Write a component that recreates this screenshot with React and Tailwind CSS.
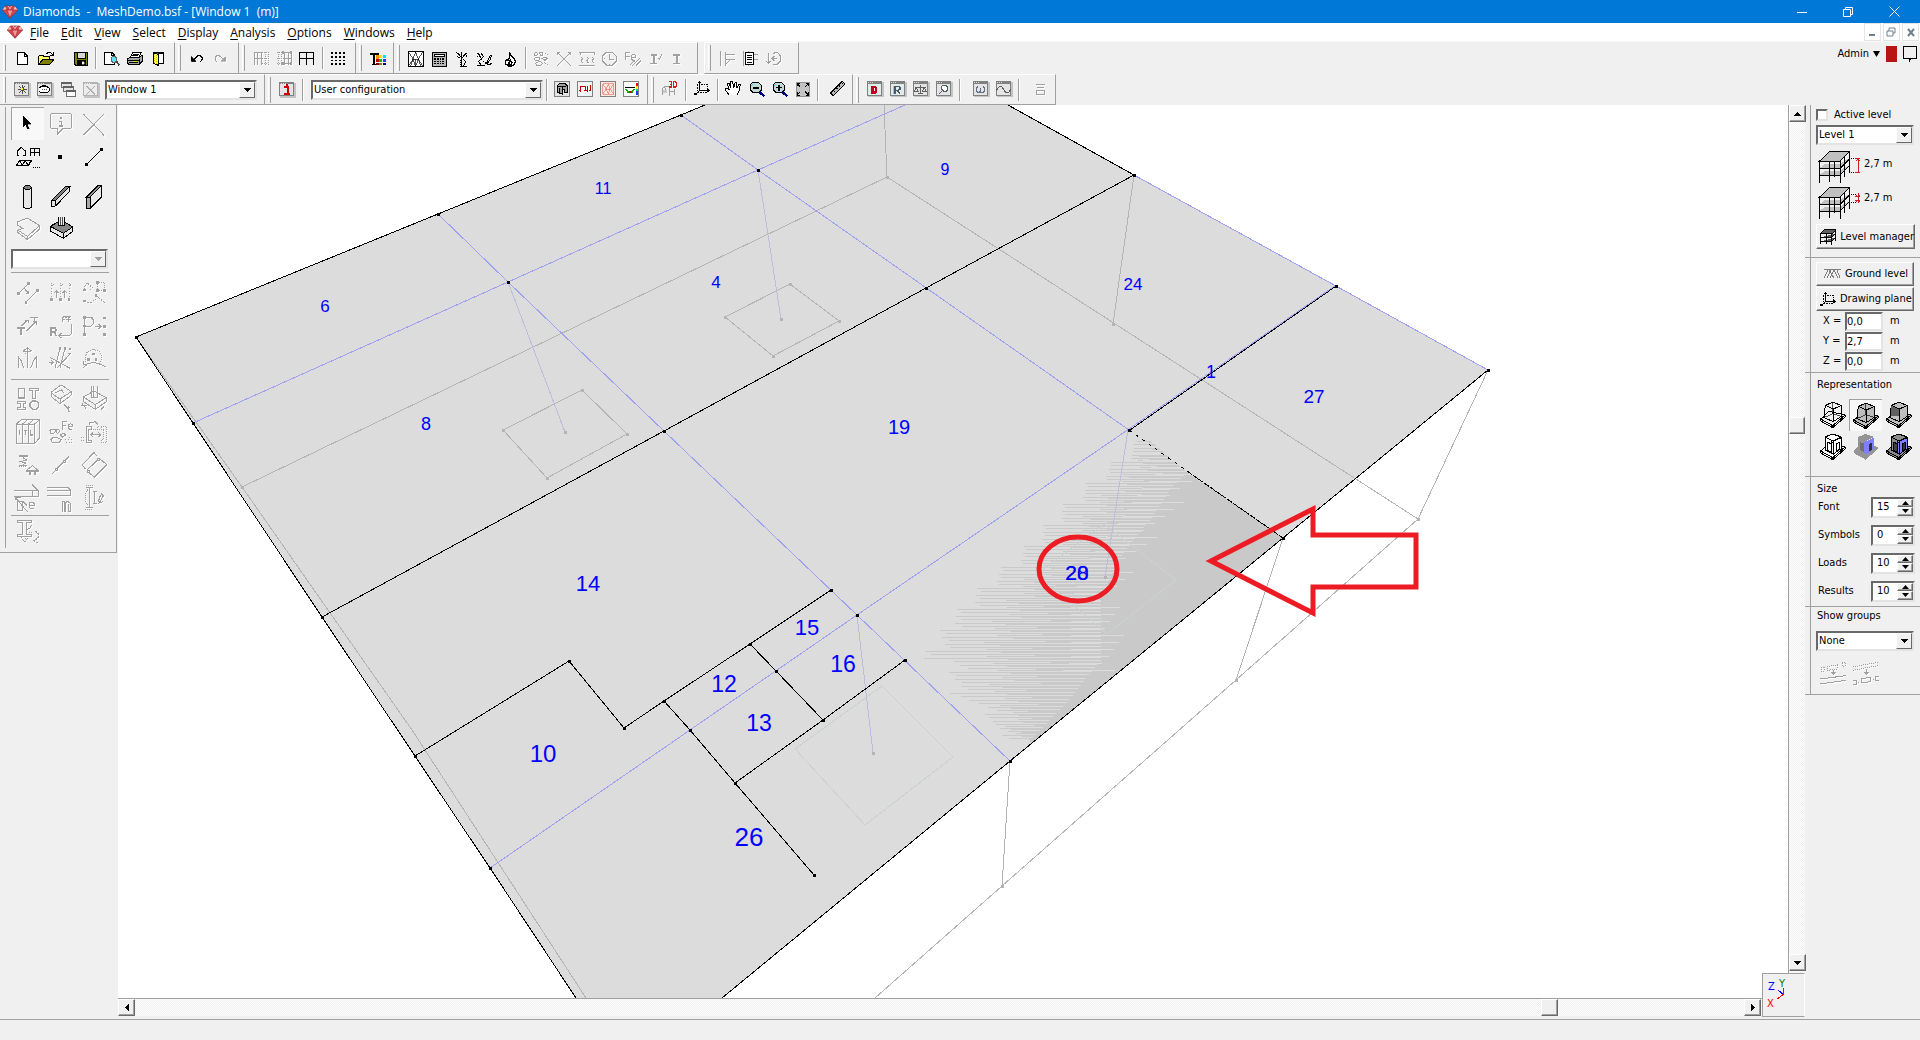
import React from "react";

const K = "#000";
const G = "#a0a0a0";
const R = "#c00000";
const N = "none";

/* Frame of a small tool window: grey title strip, light body */
const win = (x, y, c = "#808080", body = "#e4e4e4") => [
  [`M${x + 3} ${y + 3}h45v42h-45z`, "#c4c4c4", "#c4c4c4"],
  [`M${x} ${y}h42v41h-42z`, c, body],
  [`M${x} ${y + 3}h42`, c, N, 7],
  [`M${x + 4} ${y + 3}h14`, "#fff", N, 2, "2 4"],
];

/* name: [origin x, origin y, shapes]; three units make one pixel.
   shape: [path, stroke, fill, width, dashes] */
const ICONS = {
  new: [33, 138, [["M53 154H72L83 165V191H53ZM72 154V165H83", K, "#fff"]]],
  open: [102, 138, [
    ["M116 166L120 163H128L132 167H148V175H128L117 189Z", K, "#ffff60"],
    ["M117 190L128 176H161L150 190Z", K, "#808000"],
    ["M139 160L144 155H152L157 161M159 154V163H149", K],
  ]],
  save: [207, 138, [
    ["M224 155H262V192H227L224 189Z", K, "#808000"],
    ["M231 155H255V171H231Z", K, "#d8d8d8"],
    ["M231 179H255V192H231Z", K, K],
    ["M246 182H252V190H246Z", "#fff", "#fff", 1],
  ]],
  preview: [300, 138, [
    ["M314 153H334L344 163V191H314ZM334 153V163H344", K, "#fff"],
    ["M333 171L338 167H345L350 171V179L345 184H338L333 179Z", "#666", "#60e0f0"],
    ["M349 182L359 193", "#444", N, 6],
  ]],
  print: [369, 138, [
    ["M390 170L398 154H424L416 170Z", K, "#fff"],
    ["M399 159H417M396 164H414", K],
    ["M383 173L390 169H418L427 163V180L417 191H387L383 187Z", K, "#a8a8a8"],
    ["M384 179H416M388 185H414M417 173V190", K],
    ["M400 182H410", "#e0e000", N, 3],
  ]],
  book: [444, 138, [
    ["M459 154H490V186H459Z", K, "#808000"],
    ["M474 157H490V186H474Z", K, "#fff"],
    ["M459 154L475 161V193L459 186Z", K, "#ffff40"],
    ["M464 160V186M469 162V188", "#c0b000", N, 2, "3 3"],
  ]],
  undo: [561, 138, [
    ["M577 167V181H592ZM592 181L580 181L577 178", K, K, 2],
    ["M583 177L592 168L597 164H604L609 169V176L602 184", K, N, 3],
  ]],
  redo: [630, 138, [
    ["M680 167V181H666Z", G, G, 2],
    ["M675 177L666 168L660 164H653L648 169V176L655 184", G, N, 3],
  ]],
  gridA: [753, 138, [
    ["M765 154H787V193M765 154V193M765 172H787M776 154V193", G],
    ["M790 154H808V193M799 154V193M790 172H808M790 188H808", G, N, 3, "3 3"],
  ]],
  gridB: [822, 138, [
    ["M835 154H855M835 172H855M835 188H855M837 154V192M846 154V192", G, N, 3, "3 3"],
    ["M857 154H877V192M857 154V192M857 172H877M867 154V192M857 188H877", G],
    ["M849 154H854M849 188H854M874 154H879M874 188H879", G, N, 8],
  ]],
  gridC: [891, 138, [["M902 154H943V193M902 154V193M922 154V193M902 172H943", K, N, 4]]],
  dots: [981, 138, [["M994 156H1034M994 167H1034M994 178H1034M994 189H1034", K, N, 5, "5 7"]]],
  text: [84, 18, [
    ["M94 38H119M106 36V70", K, N, 6],
    ["M100 71H112", K, N, 4],
    ["M112 46H120M112 53H120", "#ff9000", N, 7],
    ["M121 46H129", "#ffe000", N, 8],
    ["M131 46H141", "#00e0ff", N, 8],
    ["M112 58H120", "#c00000", N, 8],
    ["M121 58H129", "#00c000", N, 8],
    ["M131 58H141", "#2040ff", N, 8],
    ["M112 69H120", "#800000", N, 8],
    ["M121 69H129", "#808000", N, 8],
    ["M131 69H141", "#000080", N, 8],
  ]],
  mesh: [198, 18, [
    ["M208 32H252V76H208Z", K, "#fff", 3],
    ["M208 32L222 54L208 76M252 32L238 54L252 76M222 54L230 34L238 54ZM222 54L215 76M222 54L230 76L238 54L245 76M230 54V76", K, N, 2],
  ]],
  calc: [267, 18, [
    ["M280 33H322V76H280Z", K, "#b8b8b8"],
    ["M286 39H316V47H286Z", K, "#fff"],
    ["M286 54H318M286 61H318M286 68H318", K, N, 4, "5 3"],
  ]],
  tree: [336, 18, [
    ["M352 35L360 40L367 50M385 35L377 41L370 50M368 34V75M362 75H383M373 54L380 62L374 74", K, N, 3],
    ["M354 45L362 50M384 44L374 52M364 56V72", K, N, 3, "3 3"],
  ]],
  mode: [405, 18, [
    ["M413 35L422 42L427 52L419 62L428 74M415 74H438M425 35L433 46L426 56M437 62L441 68L453 44H457L454 55L444 69L452 72L458 66", K, N, 3],
    ["M413 46L423 48M434 60L426 70", K, N, 3, "3 3"],
  ]],
  fire: [480, 18, [["M513 36L516 44L526 54L529 62L526 70L519 75H509L501 70L499 62L502 55L507 58L511 49ZM511 72L509 65L514 57L519 65L517 72Z", K, "#fff", 4]]],
  stones: [573, 18, [
    ["M586 38L591 34L596 38L593 43H587ZM602 34H610L612 42L604 45ZM586 52L592 48H599L603 54L597 59H589ZM590 66L598 62H606L610 68L604 74H594ZM609 52L618 48L625 53L618 58Z", G],
    ["M618 37L628 41M614 64L628 70", G, N, 3, "3 3"],
  ]],
  cross: [642, 18, [["M655 34L695 74M695 34L655 74M655 42V34H663M687 34H695V42", G]]],
  beamload: [711, 18, [["M721 35H769M723 35V42M767 35V42M721 72H769M727 48L731 53L727 59L731 66M744 48L748 53L744 59L748 66M760 48L764 53L760 59L764 66", G]]],
  clock: [780, 18, [["M803 33H819L831 45V61L819 73H803L791 61V45ZM811 38V54H824M811 70V74M795 53H799", G]]],
  fe: [849, 18, [
    ["M860 57V34H874M860 45H872M878 49H890V43L886 40H880L878 44V54L882 58H889", G],
    ["M872 73L886 60M881 74L902 52M891 74L906 58", G],
  ]],
  profA: [918, 18, [["M935 42H953M944 42V66M933 67H954", G, N, 5], ["M956 50L961 54L970 38", G]]],
  profB: [987, 18, [["M1003 42H1023M1013 42V66M1002 67H1024", G, N, 5]]],
  lvlA: [108, 18, [["M122 30V76M136 34V76M136 41H165M136 56H165M138 68L152 56", G]]],
  lvlB: [177, 18, [
    ["M190 30V76M222 40H234M222 56H234M204 30V76", G],
    ["M197 34H220V71H197Z", K, "#fff", 4],
    ["M202 42H217M202 49H217M202 56H217M202 63H217", K, N, 3],
  ]],
  lvlC: [246, 18, [["M265 36V67M259 60L265 67L272 60M280 40L285 35H293L300 43V61L292 70L280 69M276 53H292M283 46L276 53L283 60", G]]],
  wSun: [36, 234, [...win(47, 246), ["M70 256V282M56 268H84M61 258L79 278M79 258L61 278", K, N, 2], ["M67 268H73", "#ffff00", N, 6]]],
  wTea: [105, 234, [...win(116, 246), ["M119 264L126 260H144L152 266V272L144 278H126L120 274M126 260L131 256H138L143 260", K, "#fff"], ["M128 269H146", K, N, 2, "3 3"]]],
  wStack: [174, 234, [
    ["M186 246H216V262H186Z", "#707070", "#e4e4e4"], ["M186 248H216", "#606060", N, 7],
    ["M193 258H223V275H193Z", "#707070", "#e4e4e4"], ["M193 260H223", "#606060", N, 7],
    ["M201 270H230V288H201Z", "#707070", "#fff"], ["M201 272H230", "#606060", N, 7],
  ]],
  wDel: [243, 234, [...win(254, 246, "#b4b4b4", "#ececec"), ["M262 258L288 284M288 258L262 284", "#b0b0a8", N, 3]]],
  info: [825, 234, [...win(836, 246), ["M850 262H860V281M848 281H867", "#d00000", N, 6], ["M854 254H861", "#d00000", N, 5]]],
  vSolid: [633, 114, [
    ["M643 125H688V169H643Z", "#808080", "#e4e4e4"],
    ["M651 137L658 131H676L682 137V158H674V150L666 148V162L651 156Z", K, "#a0a0a0", 3],
    ["M651 137L667 141L682 137M667 141V150M658 144V158", K, N, 3],
  ]],
  vLoad: [702, 114, [["M713 125H758V169H713Z", "#808080", "#f4f4f4"], ["M720 156V139H736V154M736 139H737M750 136V154M716 150H724M732 150H740M746 150H754M742 139V156", R, N, 3]]],
  vMesh: [771, 114, [["M782 125H827V169H782Z", "#808080", "#ffe8e0"], ["M788 131H821V163H788ZM788 131L799 147L788 163M821 131L810 147L821 163M799 147L805 132L810 147ZM799 147L805 163L810 147", "#f07070", N, 2]]],
  vRes: [840, 114, [
    ["M851 125H896V169H851Z", "#808080", "#fff"], ["M854 143H884", K, N, 3],
    ["M857 146L863 156H877L883 146", "#00b000", N, 4], ["M866 156H876", "#e00000", N, 5],
    ["M891 130V140", "#ff0000", N, 6], ["M891 138V146", "#ffe000", N, 6], ["M891 146V154", "#00d0a0", N, 6], ["M891 154V165", "#0040ff", N, 6],
  ]],
  rebar3d: [957, 114, [
    ["M967 146L975 140H988V168M967 146V164M975 143V160M988 154H1003V166M1003 147V160", "#a0a0a0", N, 3],
    ["M969 152H982M969 156H982", "#c8c8c8", N, 4],
    ["M987 125H994V141H987M989 133H994M1000 125H1006L1010 129V137L1006 141H1000Z", "#d02020", N, 4],
  ]],
  plane: [33, 114, [["M52 133H82V158H52Z", K, N, 3, "3 2"], ["M59 125V152M59 152H88M44 164L59 152M55 129L59 125L63 129M84 148L88 152L84 156M44 158V164H50", K, N, 3]]],
  hand: [129, 114, [["M151 166L140 151V145H145L151 151L145 132L150 130L156 144L155 125H161L164 143L169 127H174L173 145L179 133H184L180 153L174 166", K, "#fff", 3]]],
  zout: [195, 114, [["M237 155L253 169", "#000080", N, 7], ["M219 127H235L244 136V150L236 157H219L210 149V135Z", K, "#c0d8d8"], ["M214 137L220 131", "#20e0e0"], ["M219 144H237", K, N, 4]]],
  zin: [264, 114, [["M306 155L322 169", "#000080", N, 7], ["M288 127H304L313 136V150L305 157H288L279 149V135Z", K, "#c0d8d8"], ["M283 137L289 131", "#20e0e0"], ["M288 143H306M297 134V152", K, N, 4]]],
  zall: [333, 114, [["M348 127H389V168H348Z", "#909090", "#c4c4c4"], ["M351 130L361 140M386 130L376 140M351 165L361 155M386 165L376 155M351 139V130H360M377 130H386V139M351 156V165H360M377 165H386V156", K, N, 3]]],
  ruler: [438, 114, [["M452 159L487 124L495 132L460 167Z", K, "#b8b8b8"], ["M461 152L465 156M469 144L473 148M477 136L481 140M485 128L489 132", K]]],
  wD: [555, 114, [...win(564, 125, "#808080", "#e0ece8"), ["M577 138H588L593 143V155L588 160H577Z", "#c00020", "#c00020", 3], ["M585 144V154", "#fff", N, 3]]],
  wR: [624, 114, [...win(633, 125, "#808080", "#e0ece8"), ["M648 161V139H659L662 143V148L658 151H648M656 151L662 161", "#485868", N, 5], ["M644 138V161", "#d09060", N, 2]]],
  wBal: [693, 114, [...win(702, 125), ["M724 136V160M716 161H732M708 143H740M712 143L706 154H718ZM736 143L730 154H742Z", "#606060", N, 3]]],
  wMag: [762, 114, [...win(771, 125), ["M790 137H802L806 141V149L802 153H793L788 148V141ZM790 152L780 161", "#506070", "#fff"]]],
  wOm: [870, 114, [...win(882, 125), ["M896 139L892 144V153L896 158H901L904 153V145M904 153L907 158H912L916 153V144L912 139", "#607088", N, 4]]],
  wSin: [939, 114, [...win(951, 125), ["M952 152L958 143L964 139L970 142L978 155L984 159L990 156L996 147", "#606060"]]],
  stack: [1050, 114, [["M1072 133H1097M1075 142H1094M1072 151H1097V163H1072Z", G]]],

  arrow: [33, 21, [["M69 48V82L77 74L83 88L88 86L82 72H93Z", K, K, 1]]],
  note: [132, 21, [["M155 40H211L215 45V81L211 86H188L173 101V86H155L151 81V45Z", G], ["M183 51V56M178 64H184V77M178 78H190", G, N, 5]]],
  del: [231, 21, [["M250 42L312 106M312 42L250 106", G]]],
  shapes: [33, 120, [["M58 166H52V153L63 142L76 153V166H70M90 144H117V167M90 144V167M103 144V167M90 156H117M50 195L59 182H95L86 195ZM59 182L67 195L76 182L84 195L94 182", K], ["M98 202H120", K, N, 3, "3 3"]]],
  node: [132, 120, [["M174 171H186", K, N, 12]]],
  line: [231, 120, [["M260 193L305 149", K], ["M256 193H264M301 149H309", K, N, 8]]],
  column: [33, 243, [["M70 262V322L76 325H89L95 322V262", K, "#e8e8e8"], ["M70 262L76 257H89L95 262L89 268H76Z", K, "#808080"]]],
  beam: [132, 243, [["M154 302L198 259L209 260V273L167 318L154 319Z", K, "#e4e4e4"], ["M154 302H166L209 260L198 258Z", K, "#808080"], ["M166 302V318", K]]],
  wall: [231, 243, [["M259 291L292 258L305 256V290L271 324L259 325Z", K, "#e8e8e8"], ["M259 291V325H271V290Z", K, "#a8a8a8"], ["M259 291H271L305 256L292 258Z", K, "#909090"]]],
  slab: [33, 339, [["M52 366L82 354L119 377V387L82 419L53 397V390L68 385L52 375ZM82 419V409L119 377M82 409L53 390", G]]],
  footing: [132, 339, [["M151 379L184 360L218 381V394L190 415L151 393Z", K, "#e8e8e8"], ["M151 379L184 360L218 381L190 400Z", K, "#888"], ["M190 400V415", K], ["M175 351V377H193V351", K, "#f0f0f0"], ["M181 351V377M187 351V377", K, N, 2]]],
  dupA: [33, 534, [["M56 583L85 553M78 610L112 575M72 567L86 584M86 575V584H77", G], ["M52 583H60M81 553H89M74 610H82M108 575H116", G, N, 8]]],
  dupB: [132, 534, [["M155 602V553M181 602V553M207 602V553", G, N, 3, "3 5"], ["M169 597V575M163 582L169 575L175 582M194 597V575M188 582L194 575L200 582M157 560L163 556M183 560L189 556M209 560L213 556", G], ["M151 602H159M177 602H185M203 602H211", G, N, 8]]],
  dupC: [231, 534, [["M292 551H314V575H292Z", G, N, 3, "3 3"], ["M253 573L256 556L262 551L275 565M270 573L280 563M254 606L262 612L274 610L288 600M288 590L314 611", G, N, 3, "6 3"], ["M249 573H257M288 551H296M310 575H318M288 575H296M284 590H292M249 606H257", G, N, 8]]],
  scaleT: [33, 633, [["M52 686H75M63 686V709", G, N, 6], ["M65 681L83 663M74 663H84V672M79 697L108 668M98 668H109V678M91 655H113M102 655V668", G]]],
  rotR: [132, 633, [["M153 711V687H165L168 692L165 698H153M162 698L169 711", G, N, 5], ["M213 675V705L208 710H176M184 702L176 710L184 717M186 668V655M205 668V655M213 652H188", G], ["M186 655H214M188 662H214", G, N, 3, "6 3"]]],
  mirP: [231, 633, [["M253 706V655H273L279 662V675L273 681H253", G], ["M249 655H257M249 681H257M249 706H257M272 657H278M310 657H318M310 683H318M310 706H318", G, N, 8], ["M286 683H302M296 676L303 683L296 690", G]]],
  mirM: [33, 732, [["M54 808V772L64 786L72 808M110 808V772L100 786L92 808M82 745V808M70 756L82 746L94 756M70 756H94", G], ["M76 764H88", G, N, 3, "3 3"]]],
  mirS: [132, 732, [["M146 790H160M153 783L160 790L153 797M165 808L180 748M180 808L195 748M170 808L213 762M203 762H214M150 775L210 808", G], ["M176 748H184M191 748H199M206 750H214", G, N, 8]]],
  mirC: [231, 732, [["M258 790L256 772L262 758L280 750L298 758L305 772L302 790", G, N, 3, "3 3"], ["M250 808L258 796L280 790L302 796L318 804M250 786V796L262 800", G], ["M276 765H284M262 781H270M284 781H292", G, N, 8]]],
  sections: [33, 42, [["M55 58H74V87H55Z", G, N, 4], ["M88 58H116V65H106V87H98V65H88ZM53 96H77V102H69V115H77V121H53V115H61V102H53Z", G], ["M98 96H108L116 103V114L108 121H98L90 114V103Z", G, N, 4]]],
  thick: [132, 42, [["M153 70L180 50H188L216 70L214 78L180 104L154 83ZM180 104V90L214 68M180 90L154 72M166 72L184 62L192 72", G], ["M192 106L204 118M204 128V112M210 115H200M209 128H204", G]]],
  footG: [231, 42, [["M250 84L282 66L318 86V99L286 121L250 98ZM250 84L286 107L318 86M286 107V121M275 52V84H291V52M281 52V84", G], ["M244 108H262M302 122L312 112M246 104L258 118", G]]],
  layers: [33, 141, [["M49 165L64 152H119V206L104 224H49ZM49 165H104L119 152M104 165V224M68 165V224M86 165V224M68 165L83 152M86 165L101 152", G], ["M58 182V198M76 184V198M72 184H80M92 184V198H99", G, N, 4]]],
  agg: [132, 141, [["M188 182V157H202M188 169H199M206 172H216V166L211 164L206 168V178L211 182H216M150 185L155 180H163L167 187L161 194H153ZM168 182L176 180L179 188L172 194ZM152 212L158 206H172L184 212L178 221H158ZM180 198L190 193L198 198L188 204Z", G], ["M152 172L160 164M196 212H216M198 219H216M208 206H214", G, N, 3, "3 5"]]],
  offset: [231, 141, [["M274 172H258V221H274V213H265V180H274ZM276 160L268 160V168M270 162L286 158L294 166M290 176L297 172M272 197H302M279 190L272 197L279 204M295 190L302 197L295 204", G, N, 3], ["M304 172H319V221H304V212H311V181H304Z", G, N, 3, "3 3"], ["M244 206H256M244 213H256M280 182H304", G, N, 3, "3 3"]]],
  support: [33, 240, [["M57 260H84", G, N, 5], ["M70 262V268L80 273L62 278L78 282L70 286M58 289H82M79 305L97 290L115 305ZM79 308H116", G], ["M58 293H82", G, N, 3, "3 3"], ["M86 313H94M101 313H109", G, N, 8]]],
  hinge: [132, 240, [["M156 315L166 305M172 298L190 280M196 273L207 263M165 298H172V305H165ZM189 273H196V280H189Z", G, N, 3]]],
  plate: [231, 240, [["M247 288L282 250L290 262M300 270L320 287L283 324L268 312M256 300L247 288M262 302L292 274M262 304H269V311H262ZM292 268H299V275H292Z", G]]],
  beamE: [33, 339, [["M42 364H98V381H42M96 347L114 364V381H98M98 364H114M46 392V384L62 384M52 396H68V424H52ZM68 396L82 410M45 384L82 428M88 410H102V404L98 400H91L87 404V414L91 419H101", G]]],
  beamN: [132, 339, [["M141 355H204L212 363V380H141M141 363H204M204 363L212 363M188 428V396H193V428M196 428V402L202 396L212 404V428H206V406", G]]],
  length: [231, 339, [["M268 356V416M258 356H278M258 416H278M284 370V402M278 368H290M278 403H290M296 404L310 381L306 374L298 386L296 398L302 402L310 396", G], ["M258 350H280M256 422H280M264 362L256 375V396L264 410", G, N, 3, "3 3"]]],
  iRot: [33, 447, [["M52 461H95V467H80V503H95V508H52V503H67V467H52Z", G], ["M74 514H82L72 528M82 490L98 472M88 495L100 500M64 510L70 522", G, N, 3, "3 3"], ["M107 492L115 500V510L104 522M114 528L102 521L114 512", G, N, 3, "6 3"]]],
};

function Glyph({ name, size = 23 }) {
  const [x, y, shapes] = ICONS[name];
  const n = size * 3;
  const grey = shapes.every((s) => s[1] === G);
  return (
    <svg
      width={size}
      height={size}
      viewBox={`${x} ${y} ${n} ${n}`}
      shapeRendering="crispEdges"
      className={grey ? "drop-shadow-[1px_1px_0_#fff]" : ""}
      aria-hidden="true"
    >
      {shapes.map(([d, stroke, fill = N, w = 3, dash], i) => (
        <path key={i} d={d} stroke={stroke} fill={fill} strokeWidth={w} strokeDasharray={dash} />
      ))}
    </svg>
  );
}

const Tool = ({ n }) => (
  <button aria-label={n} className="h-[23px] w-[23px] shrink-0">
    <Glyph name={n} />
  </button>
);
const Tools = ({ names }) => names.split(" ").map((n) => <Tool key={n} n={n} />);
const Sep = () => <span className="mx-[3px] h-[22px] w-[2px] shrink-0 border-r border-l border-r-white border-l-[#a0a0a0]" />;

function Band({ children, className = "" }) {
  return (
    <div className={`flex h-full shrink-0 items-center border-t border-r border-b border-t-white border-r-[#a0a0a0] border-b-[#a0a0a0] ${className}`}>
      <span className="mr-[5px] ml-[3px] h-[26px] w-[3px] shrink-0 self-center border-r border-l border-r-[#a0a0a0] border-l-white" />
      {children}
    </div>
  );
}

function Combo({ label, value, className = "", dim = false }) {
  return (
    <div className={`relative h-5 shrink-0 border-2 border-t-[#696969] border-r-[#e3e3e3] border-b-[#e3e3e3] border-l-[#696969] bg-white ${className}`}>
      <select aria-label={label} defaultValue={value} className="block h-4 w-full appearance-none bg-transparent pl-px text-[11px] leading-4 outline-none">
        <option>{value}</option>
      </select>
      <span className="pointer-events-none absolute inset-y-0 right-0 flex w-4 items-center justify-center border border-t-white border-r-[#696969] border-b-[#696969] border-l-white bg-[#f0f0f0]">
        <svg width="7" height="4" viewBox="0 0 7 4" shapeRendering="crispEdges"><path d="M0 0h7L3.500 4z" fill={dim ? G : K} /></svg>
      </span>
    </div>
  );
}

function Gem() {
  return (
    <svg width="16" height="16" viewBox="0 0 48 48" aria-hidden="true">
      <path d="M1 18L10 6H38L47 18L24 43Z" fill="#d84a50" stroke="#8a2a2a" strokeWidth="2" />
      <path d="M1 18L10 6L15 17ZM17 7H31L24 16ZM38 6L47 18L33 17Z" fill="#ffc4c4" />
      <path d="M15 19H33L24 40Z" fill="#f49a9a" />
      <path d="M1 18H47M15 18L24 42L33 18M10 6L15 18L24 6L33 18L38 6" stroke="#a83038" strokeWidth="2" fill="none" />
    </svg>
  );
}

const MENU = ["File", "Edit", "View", "Select", "Display", "Analysis", "Options", "Windows", "Help"];

function TitleBar() {
  return (
    <header className="flex h-[23px] shrink-0 items-center bg-[#0078d7] pl-[2px] font-['Open_Sans',sans-serif] text-xs text-white">
      <Gem />
      <h1 className="ml-[5px] whitespace-pre">Diamonds  -  MeshDemo.bsf - [Window 1  (m)]</h1>
      <div className="mr-[3px] ml-auto flex items-center">
        <button aria-label="Minimize" className="flex h-[22px] w-[46px] items-center justify-center"><svg width="10" height="10" viewBox="0 0 10 10" shapeRendering="crispEdges"><path d="M0 5h10" stroke="#fff" strokeWidth="1" /></svg></button>
        <button aria-label="Restore" className="flex h-[22px] w-[46px] items-center justify-center"><svg width="10" height="10" viewBox="-.5 -.5 10 10" fill="none" stroke="#fff"><path d="M0 2h7v7H0zM2 2V0h7v7H7" /></svg></button>
        <button aria-label="Close" className="flex h-[22px] w-[46px] items-center justify-center"><svg width="11" height="11" viewBox="0 0 11 11" stroke="#fff"><path d="M.5.5l10 10M10.500.5l-10 10" /></svg></button>
      </div>
    </header>
  );
}

function MenuBar() {
  return (
    <nav className="flex h-[18px] shrink-0 items-center bg-white pl-[7px] font-['Open_Sans',sans-serif] text-xs text-black">
      <Gem />
      <div className="ml-[7px] flex gap-3 pt-px">
        {MENU.map((m) => (
          <button key={m}><u className="underline-offset-2">{m[0]}</u>{m.slice(1)}</button>
        ))}
      </div>
      <div className="ml-auto flex gap-[2px] pr-px">
        {["M4 11h6", "M3 7h6v5H3zM5 7V4h6v5H9", "M5 5l6 7M11 5l-6 7"].map((d, i) => (
          <button key={d} aria-label={["Minimize child", "Restore child", "Close child"][i]} className="h-[18px] w-[17px] border border-[#e4e4e4]">
            <svg width="15" height="16" viewBox="0 0 15 16" fill="none" stroke="#708090" strokeWidth={i === 1 ? 1 : 2}><path d={d} /></svg>
          </button>
        ))}
      </div>
    </nav>
  );
}

function Toolbars() {
  return (
    <div className="flex h-16 shrink-0 flex-col border-t border-[#f8f8f8] bg-[#f0f0f0]">
      <div className="flex h-8">
        <Band className="w-[175px]"><Tools names="new open" /><span className="w-3" /><Tool n="save" /><Sep /><Tools names="preview print" /><span className="w-[2px]" /><Tool n="book" /></Band>
        <Band className="w-16"><Tools names="undo redo" /></Band>
        <Band className="w-[117px]"><Tools names="gridA gridB gridC" /><Sep /><Tool n="dots" /></Band>
        <Band className="w-[38px]"><Tool n="text" /></Band>
        <Band className="w-[304px]"><Tools names="mesh calc tree mode" /><span className="w-[2px]" /><Tool n="fire" /><Sep /><Tools names="stones cross beamload clock fe profA profB" /></Band>
        <Band className="ml-[6px] w-[95px] border-l border-l-white"><Tools names="lvlA lvlB lvlC" /></Band>
        <div className="mr-[3px] ml-auto flex h-6 items-center">
          <button className="flex items-center gap-1 text-[11px]">Admin <svg width="7" height="6" viewBox="0 0 7 6"><path d="M0 0h7L3.500 6z" /></svg></button>
          <span className="ml-[6px] h-4 w-[11px] bg-[#b81414]" />
          <button aria-label="Comments" className="ml-[6px]"><svg width="14" height="16" viewBox="0 0 14 16" fill="none" stroke="#000" strokeWidth="1" shapeRendering="crispEdges"><path d="M.5.5h13v12H8L6 15.500V12.500H.5z" /></svg></button>
        </div>
      </div>
      <div className="flex h-[31px]">
        <Band className="w-[265px]"><Tools names="wSun wTea wStack wDel" /><Combo label="Window" value="Window 1" className="ml-[2px] w-[152px]" /></Band>
        <Band className="w-[383px]"><Tool n="info" /><Sep /><Combo label="Configuration" value="User configuration" className="ml-1 w-[232px]" /><Sep /><Tools names="vSolid vLoad vMesh vRes" /></Band>
        <Band className="w-[205px]"><Tool n="rebar3d" /><Sep /><span className="w-px" /><Tool n="plane" /><Sep /><Tools names="hand zout zin zall" /><Sep /><span className="w-1" /><Tool n="ruler" /></Band>
        <Band className="w-[203px]"><Tools names="wD wR wBal wMag" /><Sep /><span className="w-[5px]" /><Tools names="wOm wSin" /><Sep /><span className="w-[6px]" /><Tool n="stack" /></Band>
      </div>
    </div>
  );
}

function Palette({ rows }) {
  return (
    <div className="grid grid-cols-3">
      {rows.split(" ").map((n) => (
        <button key={n} aria-label={n} className={n === "arrow" ? "h-[33px] border-t border-l border-[#a0a0a0] bg-[#f8f8f8]" : "h-[33px]"}>
          <span className={n === "arrow" ? "-mt-px -ml-px block" : "block"}><Glyph name={n} size={33} /></span>
        </button>
      ))}
    </div>
  );
}

function LeftPanel() {
  const rule = "border-t border-[#a0a0a0]";
  return (
    <aside className="w-[118px] shrink-0">
      <div className="mr-px flex h-[448px] border-r border-b border-[#a0a0a0] pt-[2px] pl-[5px]">
        <span className="mr-[5px] mb-1 w-px bg-[#a0a0a0]" />
        <div className="w-[99px]">
          <Palette rows="arrow note del shapes node line" />
          <div className="h-2" />
          <div className="grid grid-cols-3">
            {"column beam wall slab footing".split(" ").map((n) => (
              <button key={n} aria-label={n} className="h-8 overflow-hidden"><Glyph name={n} size={33} /></button>
            ))}
          </div>
          <Combo label="Section" value="" dim className="mt-[4px] w-[97px]" />
          <div className={`mt-[3px] mb-1 w-[98px] ${rule}`} />
          <Palette rows="dupA dupB dupC scaleT rotR mirP mirM mirS mirC" />
          <div className={`mt-[3px] mb-[3px] w-[98px] ${rule}`} />
          <Palette rows="sections thick footG layers agg offset support hinge plate beamE beamN length" />
          <div className={`w-[98px] ${rule}`} />
          <Palette rows="iRot" />
        </div>
      </div>
    </aside>
  );
}

const BLACK = [
  "136,337 438,214 681,115 705,105", "136,337 193,423 322,617 415,756 490,868 576,998",
  "1008,105 1134,175", "322,617 664,431 926,288 1134,175", "1488,370 1283,538 1010,761 722,998",
  "415,756 569,661 624,728 664,701 750,644 831,590", "664,701 690,730 735,783 814,875",
  "750,644 776,671 823,720", "735,783 823,720 905,660", "1130,430 1336,286",
];
const BLUE = [
  "193,423 508,282 758,170 905,105", "681,115 758,170 1129,430", "438,214 508,282 664,431 857,615 1010,761",
  "490,868 690,730 857,615 1129,429 1336,285", "1134,175 1336,286 1488,370",
];
const PALE = ["508,282 565,432", "758,170 781,319", "857,615 873,753", "1128,430 1105,577"];
const GREY = [
  "138,340 242,487 412,730 586,998", "242,487 887,177 1418,519", "884,105 887,177", "1134,175 1113,324",
  "1488,370 1418,519 1236,680 1002,886 875,998", "1283,538 1236,680", "1010,761 1002,886",
  "582,390 627,434 547,478 503,430 582,390", "790,284 839,321 773,356 725,317 790,284",
];
const FAINT = ["882,686 953,757 865,825 795,749 882,686", "1104,524 1176,580 1107,634 1037,574 1104,524"];
const NODES = [
  [136, 337], [438, 214], [681, 115], [508, 282], [758, 170], [193, 423], [322, 617], [664, 431], [926, 288], [1134, 175],
  [1336, 286], [1488, 370], [1129, 430], [1283, 538], [1010, 761], [831, 590], [857, 615], [750, 644], [776, 671], [664, 701],
  [690, 730], [823, 720], [905, 660], [735, 783], [814, 875], [569, 661], [624, 728], [415, 756], [490, 868],
];
const SOFT = [
  [582, 390], [627, 434], [547, 478], [503, 430], [565, 432], [790, 284], [839, 321], [773, 356], [725, 317], [781, 319],
  [873, 753], [1105, 577], [242, 487], [887, 177], [1113, 324], [1418, 519], [1236, 680], [1002, 886],
];
const LABELS = [
  ["6", 325, 307, 17], ["11", 603, 189, 16], ["4", 716, 283, 17], ["8", 426, 425, 18], ["9", 945, 170, 16], ["24", 1133, 285, 17],
  ["27", 1314, 397, 19], ["1", 1211, 373, 18], ["19", 899, 428, 20], ["14", 588, 584, 22], ["15", 807, 628, 22], ["12", 724, 685, 23],
  ["16", 843, 665, 23], ["13", 759, 724, 23], ["10", 543, 754, 24], ["26", 749, 838, 26], ["28", 1077, 573, 21], ["20", 1077, 573, 21],
];

/* Overlapping plates 20 and 28 flicker into horizontal stripes */
const LEFT_EDGE = [[440, 1138], [478, 1092], [507, 1060], [550, 1020], [585, 980], [622, 944], [645, 932], [658, 918], [662, 948], [693, 950], [712, 985], [728, 988], [741, 1014]];
const SOLID_EDGE = [[440, 1150], [472, 1187], [490, 1170], [520, 1150], [560, 1118], [600, 1101], [660, 1101], [700, 1069], [741, 1030]];
const at = (pts, y) => {
  const i = Math.max(1, pts.findIndex((p) => p[0] >= y));
  const [[y0, x0], [y1, x1]] = [pts[i - 1], pts[i]];
  return x0 + ((x1 - x0) * (y - y0)) / (y1 - y0);
};
const stripes = [];
for (let y = 441; y < 740; y += 1) {
  const l = at(LEFT_EDGE, y);
  const s = at(SOLID_EDGE, y);
  const share = { 0: 0, 3: 0.05, 5: 0.3, 1: 0.4, 4: 0.6 }[y % 7];
  const jitter = ((y * 37) % 3) * 6;
  if (share !== undefined) stripes.push(`M${Math.round(l + (s - l) * share) + jitter} ${y}.5H${Math.round(s)}`);
}
const gaps = [];
for (let y = 446; y < 672; y += 7) gaps.push(`M${Math.round(at(SOLID_EDGE, y)) - 30} ${y}.5h${30 + ((y * 13) % 24)}`);

const Lines = ({ list, color }) => list.map((p) => <polyline key={p} points={p} fill="none" stroke={color} />);

function Canvas() {
  return (
    <svg className="absolute inset-0 h-full w-full" viewBox="118 105 1670 893" preserveAspectRatio="xMinYMin slice" shapeRendering="crispEdges" role="img" aria-label="Model view">
      <polygon points="136,337 705,105 1008,105 1488,370 722,998 576,998" fill="#dcdcdc" />
      <polygon points="1187,472 1283,538 1030,745 1030,741 1069,700 1101,660 1101,600 1118,560 1150,520 1170,490" fill="#c9c9c9" />
      <path d={stripes.join("")} stroke="#c9c9c9" fill="none" />
      <path d={gaps.join("")} stroke="#dcdcdc" fill="none" />
      <Lines list={GREY} color="#b4b4b4" />
      <Lines list={FAINT} color="#cbd0d0" />
      <Lines list={PALE} color="#bcbcdc" />
      <Lines list={BLACK} color="#000" />
      <Lines list={BLUE} color="#a0a0f0" />
      <path d="M1129 430L1187 471" stroke="#000" strokeDasharray="3 5" />
      <path d="M1187 471L1283 538" stroke="#000" strokeDasharray="6 1" />
      {SOFT.map(([x, y]) => <rect key={`${x}-${y}`} x={x - 1} y={y - 1} width="3" height="3" fill="#b4b4b4" />)}
      {NODES.map(([x, y]) => <rect key={`${x}-${y}`} x={x - 1} y={y - 1} width="3" height="3" fill="#000" />)}
      <g fill="#0000ff" fontFamily="Liberation Sans, Arial, sans-serif" textAnchor="middle">
        {LABELS.map(([t, x, y, s]) => <text key={t} x={x} y={y + Math.round(s * 0.36) - 1} fontSize={s}>{t}</text>)}
      </g>
      <g fill="none" stroke="#ed1c24" shapeRendering="auto">
        <ellipse cx="1078" cy="569" rx="39" ry="32" strokeWidth="5" />
        <path d="M1211 561L1313 509V535H1416V587H1313V613Z" strokeWidth="5" />
      </g>
    </svg>
  );
}

const raised = "border border-t-white border-l-white border-r-[#696969] border-b-[#696969] bg-[#f0f0f0] shadow-[inset_-1px_-1px_0_#a0a0a0]";
const dither = "bg-[repeating-conic-gradient(#ffffff_0_25%,#f0f0f0_0_50%)] bg-[length:2px_2px]";

const ScrollArrow = ({ d, label, w = 7, h = 7 }) => (
  <button aria-label={label} className={`flex h-[17px] w-[17px] shrink-0 items-center justify-center ${raised}`}>
    <svg width={w} height={h} viewBox={`0 0 ${w} ${h}`} shapeRendering="crispEdges"><path d={d} /></svg>
  </button>
);

function Viewport() {
  return (
    <main className="relative flex min-w-0 flex-1 flex-col">
      <div className="flex min-h-0 flex-1">
        <div className="relative min-w-0 flex-1 bg-white"><Canvas /></div>
        <div className={`flex w-[17px] flex-col border-l border-[#a0a0a0] ${dither}`}>
          <ScrollArrow label="Scroll up" d="M0 4h7L3.500 0z" h={4} />
          <div className="grow-[295]" />
          <span className={`h-[17px] ${raised}`} />
          <div className="grow-[520]" />
          <ScrollArrow label="Scroll down" d="M0 0h7L3.500 4z" h={4} />
          <div className="h-[27px]" />
        </div>
      </div>
      <div className={`flex h-[18px] shrink-0 border-t border-[#a0a0a0] ${dither}`}>
        <ScrollArrow label="Scroll left" d="M4 0v7L0 3.500z" w={4} />
        <div className="grow-[1406]" />
        <span className={`h-[17px] w-[17px] ${raised}`} />
        <div className="grow-[186]" />
        <ScrollArrow label="Scroll right" d="M0 0v7L4 3.500z" w={4} />
        <div className="w-11" />
      </div>
      <div className="h-[3px] shrink-0" />
      <div className="absolute right-0 bottom-[2px] h-[44px] w-[43px] border border-t-[#a0a0a0] border-r-white border-b-[#a0a0a0] border-l-[#a0a0a0] bg-[#f0f0f0]">
        <svg width="41" height="42" viewBox="1763 975 41 42" fontFamily="DejaVu Sans Condensed, sans-serif" fontSize="11">
          <text x="1768" y="991" fill="#0000ff">Z</text>
          <text x="1779" y="988" fill="#008000">Y</text>
          <text x="1767" y="1008" fill="#ff0000">X</text>
          <g shapeRendering="crispEdges" fill="none"><path d="M1778 991l6 5" stroke="#00f" /><path d="M1783.500 989v6" stroke="#008000" /><path d="M1784 995l-7 5" stroke="#f00" /></g>
        </svg>
      </div>
    </main>
  );
}

/* Three-storey frame with a dimension mark */
function Storeys({ small = false }) {
  return (
    <svg width="44" height="36" viewBox="114 450 132 108" shapeRendering="crispEdges" fill="none" stroke="#000" strokeWidth="3" aria-hidden="true">
      <path d="M118 484L150 454H209L180 484ZM118 505L134 492H178L209 474L180 505ZM118 526L134 512H178L209 496L180 526Z" fill="#c0c0c0" stroke="none" />
      <path d="M118 484L150 454H209L180 484ZM118 505H180L209 476M118 526H180L209 496M119 484V548M180 484V548M148 484V545M209 454V520M164 484V530M194 470V532" />
      {small ? (
        <><path d="M212 476H228M212 498H228" strokeDasharray="3 3" /><path d="M234 472V502M226 482H240M226 492H240M228 478L234 482L240 478M228 496L234 492L240 496" stroke="#d02020" /></>
      ) : (
        <><path d="M212 476H228M212 518H228" strokeDasharray="3 3" /><path d="M234 476V518M226 476H240M226 518H240M229 482L234 477L239 482" stroke="#d02020" /></>
      )}
    </svg>
  );
}

/* Block-on-footing previews for the representation modes */
const REP = [
  { face: "none", line: "#000" },
  { face: "#bcbcbc", line: "#000", on: true },
  { face: "#c0c0c0", line: "#000", left: "#606060" },
  { face: "#fff", line: "#000", side: "#fff", hole: "#fff" },
  { face: "#949494", line: "none", side: "#8080ff", hole: "#707070" },
  { face: "#8c8c8c", line: "#000", side: "#8080ff", hole: "#404040" },
];
function Rep({ face, line, left, side, hole }) {
  return (
    <svg width="26" height="28" viewBox="0 0 78 84" shapeRendering="crispEdges" strokeWidth="3" aria-hidden="true">
      <path d="M2 54L27 31L75 42V48L38 80L2 60Z" fill={face} stroke={line} />
      <path d="M2 54L38 74L75 42M38 74V80" fill="none" stroke={line} />
      {hole ? (
        <>
          <path d="M15 12L40 24V63L15 51Z" fill={face} stroke={line} />
          <path d="M40 24L64 14V47L40 63Z" fill={side} stroke={line} />
          <path d="M33 26L40 29V62L33 58Z" fill={side} stroke={line} />
          <path d="M21 27L33 32V57L21 51Z" fill={hole} stroke={line} />
          <path d="M48 33L57 29V50L48 56Z" fill={hole === "#fff" ? "#fff" : "#303040"} stroke={line} />
          <path d="M15 12L38 3L64 12L40 24Z" fill={face} stroke={line} />
        </>
      ) : (
        <>
          <path d="M16 13L38 4L64 13V46L40 62L12 50Z" fill={face} stroke={line} />
          {left && <path d="M16 13L40 24V44L14 46Z" fill={left} />}
          <path d="M16 13L40 24L64 13M40 24V62" fill="none" stroke={line} />
          {!left && <path d="M38 4V38L12 50M38 38L64 46" fill="none" stroke={line} strokeWidth="2" />}
        </>
      )}
    </svg>
  );
}

const Group = ({ children, className }) => (
  <section className={`border-b border-[#a0a0a0] pl-[5px] ${className}`}>
    <div className="h-full border-l border-[#a0a0a0] pt-[2px] pr-[5px] pl-[5px]">{children}</div>
  </section>
);

const sunken = "border-2 border-t-[#696969] border-l-[#696969] border-r-[#e3e3e3] border-b-[#e3e3e3] bg-white";

function RightPanel() {
  return (
    <aside className="w-[115px] shrink-0 text-[11px] leading-[14px]">
      <Group className="h-[153px]">
        <label className="flex h-4 items-center gap-[6px] whitespace-nowrap">
          <input type="checkbox" className={`h-3 w-3 appearance-none ${sunken}`} />Active level
        </label>
        <Combo label="Level" value="Level 1" className="mt-[2px] w-[98px]" />
        <div className="mt-[5px] flex h-9 items-center gap-[2px] pl-[2px]"><Storeys /><span className="pb-2">2,7 m</span></div>
        <div className="flex h-9 items-center gap-[2px] pl-[2px]"><Storeys small /><span className="pb-3">2,7 m</span></div>
        <button className={`mt-[2px] flex h-[25px] w-[99px] items-center gap-1 pl-[3px] whitespace-nowrap ${raised}`}>
          <svg width="17" height="16" viewBox="0 0 17 16" shapeRendering="crispEdges" fill="#606060" stroke="#000"><path d="M.5 4.500l4-4h12l-4 4zM.5 8.500h12l4-4M.5 12.500h12l4-4M.5 4v11M6.500 4v11M12.500 4v12M16.500 1v11" /></svg>
          Level manager
        </button>
      </Group>
      <Group className="h-[115px]">
        <button className={`mt-[2px] flex h-6 w-[98px] items-center gap-1 pl-[7px] whitespace-nowrap ${raised}`}>
          <svg width="17" height="10" viewBox="0 0 17 10" shapeRendering="crispEdges" fill="none" stroke="#808080"><path d="M0 .5h17M0 9l4-8M3 9l4-8M6 9l4-8M10 1l4 8M13 1l3 8M5 1l5 8" /></svg>
          Ground level
        </button>
        <button className={`mt-px flex h-6 w-[98px] items-center gap-[2px] pl-[3px] whitespace-nowrap ${raised}`}>
          <svg width="18" height="16" viewBox="42 120 54 48" shapeRendering="crispEdges" fill="none" stroke="#000" strokeWidth="3"><path d={ICONS.plane[2][0][0]} strokeDasharray="3 2" /><path d={ICONS.plane[2][1][0]} /></svg>
          Drawing plane
        </button>
        {[["X", "0,0"], ["Y", "2,7"], ["Z", "0,0"]].map(([a, v]) => (
          <label key={a} className="flex h-5 items-center pl-[7px]">
            <span className="w-[22px] whitespace-nowrap">{a} =</span>
            <input defaultValue={v} className={`h-[19px] w-[38px] ${sunken}`} />
            <span className="ml-[7px]">m</span>
          </label>
        ))}
      </Group>
      <Group className="h-[104px]">
        <h2 className="pt-[3px] pl-px">Representation</h2>
        <div className="mt-[7px] grid grid-cols-3">
          {REP.map((r, i) => (
            <button key={i} aria-label={`Representation ${i + 1}`} className={r.on ? "flex h-8 items-center justify-center border-t border-l border-[#a0a0a0] bg-[#f8f8f8]" : "flex h-8 items-center justify-center"}><Rep {...r} /></button>
          ))}
        </div>
      </Group>
      <Group className="h-[130px]">
        <h2 className="pt-[3px] pl-px">Size</h2>
        {[["Font", 15], ["Symbols", 0], ["Loads", 10], ["Results", 10]].map(([n, v]) => (
          <label key={n} className="flex h-7 items-center justify-between pb-[6px] pl-[2px]">
            {n}
            <span className={`flex h-[21px] w-[44px] ${sunken}`}>
              <input defaultValue={v} className="w-[24px] min-w-0 flex-1 pl-1" />
              <span className="flex w-4 flex-col">
                <button aria-label={`${n} up`} className={`flex flex-1 items-center justify-center ${raised}`}><svg width="7" height="4"><path d="M0 4h7L3.500 0z" /></svg></button>
                <button aria-label={`${n} down`} className={`flex flex-1 items-center justify-center ${raised}`}><svg width="7" height="4"><path d="M0 0h7L3.500 4z" /></svg></button>
              </span>
            </span>
          </label>
        ))}
      </Group>
      <Group className="h-[88px]">
        <h2 className="pl-px">Show groups</h2>
        <Combo label="Show groups" value="None" className="mt-2 w-[98px]" />
        <div className="mt-[10px] flex gap-[7px] pl-1">
          <button aria-label="Group"><svg width="26" height="24" viewBox="120 574 78 72" shapeRendering="crispEdges" fill="none" stroke={G} strokeWidth="3" className="drop-shadow-[1px_1px_0_#fff]"><path d="M123 592H134V604H123ZM142 590L172 586V598L142 602ZM186 578H195V590H186Z" strokeDasharray="3 3" /><path d="M160 600V612M154 607L160 613L166 607M120 628L198 618M120 643L198 632" /></svg></button>
          <button aria-label="Ungroup"><svg width="26" height="24" viewBox="219 574 78 72" shapeRendering="crispEdges" fill="none" stroke={G} strokeWidth="3" className="drop-shadow-[1px_1px_0_#fff]"><path d="M219 592L297 577M219 602L297 587" strokeDasharray="3 3" /><path d="M260 598V612M254 607L260 613L266 607M219 632H230V643H219M244 628L272 622V636L244 640ZM297 620H286V632H297M234 638H238M278 630H282" /></svg></button>
        </div>
      </Group>
    </aside>
  );
}

export default function App() {
  return (
    <div className="flex h-screen min-h-[760px] flex-col bg-[#f0f0f0] font-['DejaVu_Sans_Condensed','DejaVu_Sans',sans-serif] text-black">
      <TitleBar />
      <MenuBar />
      <Toolbars />
      <div className="flex min-h-0 flex-1">
        <LeftPanel />
        <Viewport />
        <RightPanel />
      </div>
      <footer className="h-[21px] shrink-0 border-t border-[#a0a0a0]" />
    </div>
  );
}
